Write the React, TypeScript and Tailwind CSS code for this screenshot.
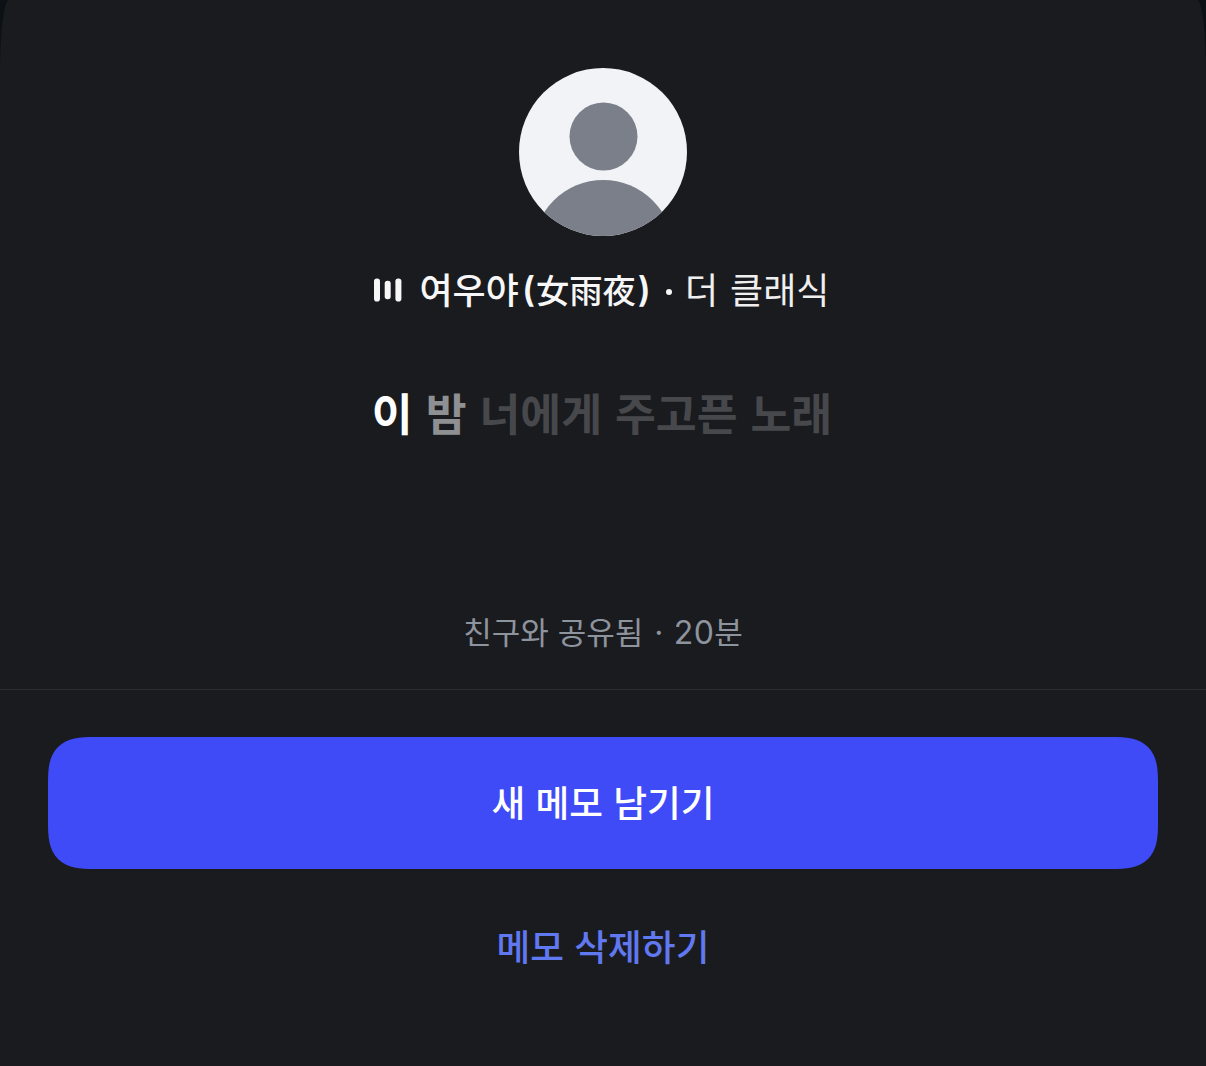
import React from 'react';

const FONT = "font-['Noto_Sans_CJK_KR',sans-serif]";

const Avatar: React.FC = () => (
  <svg viewBox="0 0 168 168" className="size-[168px] shrink-0" role="img" aria-label="프로필">
    <defs>
      <clipPath id="avatar">
        <circle cx="84" cy="84" r="84" />
      </clipPath>
    </defs>
    <g clipPath="url(#avatar)">
      <rect width="168" height="168" fill="#f2f3f6" />
      <circle cx="84.5" cy="68.5" r="34" fill="#7a7f8a" />
      <circle cx="84.2" cy="182" r="70" fill="#7a7f8a" />
    </g>
  </svg>
);

const MusicBars: React.FC = () => (
  <svg viewBox="0 0 28 24" className="h-6 w-7 shrink-0" fill="#f7f7f8" aria-hidden="true">
    <rect x="0" y="0.5" width="6" height="23" rx="2.8" />
    <rect x="10.7" y="2.8" width="6" height="18.5" rx="2.8" />
    <rect x="21.4" y="0.5" width="6" height="23" rx="2.8" />
  </svg>
);

const App: React.FC = () => {
  return (
    <div className="h-[1066px] w-full overflow-hidden bg-[#0c1115]">
      <div className={`flex h-full flex-col items-center rounded-t-[9px_72px] bg-[#1a1b1e] pt-[68px] whitespace-nowrap ${FONT}`}>
        <Avatar />

        {/* 음악 정보 */}
        <div className="mt-[30px] flex h-12 w-[459px] items-center text-[36px] leading-[48px] text-[#f7f7f8]">
          <MusicBars />
          <div className="-mt-[4px] ml-[18px] flex items-center">
            <span className="font-medium">여우야</span>
            <span className="mt-0.5 ml-[3px] font-['Inter',sans-serif] text-[35px] font-semibold">(</span>
            <span className="mt-0.5 ml-px font-['Noto_Sans_CJK_JP',sans-serif] text-[33.3px] font-medium">女雨夜</span>
            <span className="mt-0.5 ml-[2px] font-['Inter',sans-serif] text-[35px] font-semibold">)</span>
            <span className="mt-2 mr-[13px] ml-[15px] size-[6px] rounded-full bg-[#f7f7f8]" />
            <span className="text-[#efeff0] [word-spacing:4px]">더 클래식</span>
          </div>
        </div>

        {/* 가사 */}
        <p className="mt-[66px] mr-[2px] flex h-16 gap-[13px] text-[44.4px] leading-[64px] font-bold text-[#47484b]">
          <span className="text-white">이</span>
          <span className="text-[#8f9092]">밤</span>
          <span>너에게</span>
          <span>주고픈</span>
          <span>노래</span>
        </p>

        {/* 공유 상태 */}
        <div className="mt-[163px] flex h-12 items-baseline text-[31px] leading-[48px] text-[#8e949e]">
          <span className="[word-spacing:2px]">친구와 공유됨</span>
          <span className="ml-[7px]">·</span>
          <span className="ml-[6px] font-['Inter',sans-serif] text-[32px] tracking-[0.5px]">20</span>
          <span>분</span>
        </div>

        <div className="mt-[34px] flex w-full flex-col items-center border-t border-[#2a2b30] px-12 pt-[47px]">
          <button
            type="button"
            className="h-[132px] w-full rounded-[46px] bg-[#404bf8] pb-0.5 text-[36.7px] font-medium text-white [corner-shape:superellipse(1.5)] [word-spacing:2px]"
          >
            새 메모 남기기
          </button>
          <button type="button" className="mt-[12px] h-[132px] w-full pb-0.5 text-[36.7px] font-medium text-[#6078f0] [word-spacing:2px]">
            메모 삭제하기
          </button>
        </div>
      </div>
    </div>
  );
};

export default App;
